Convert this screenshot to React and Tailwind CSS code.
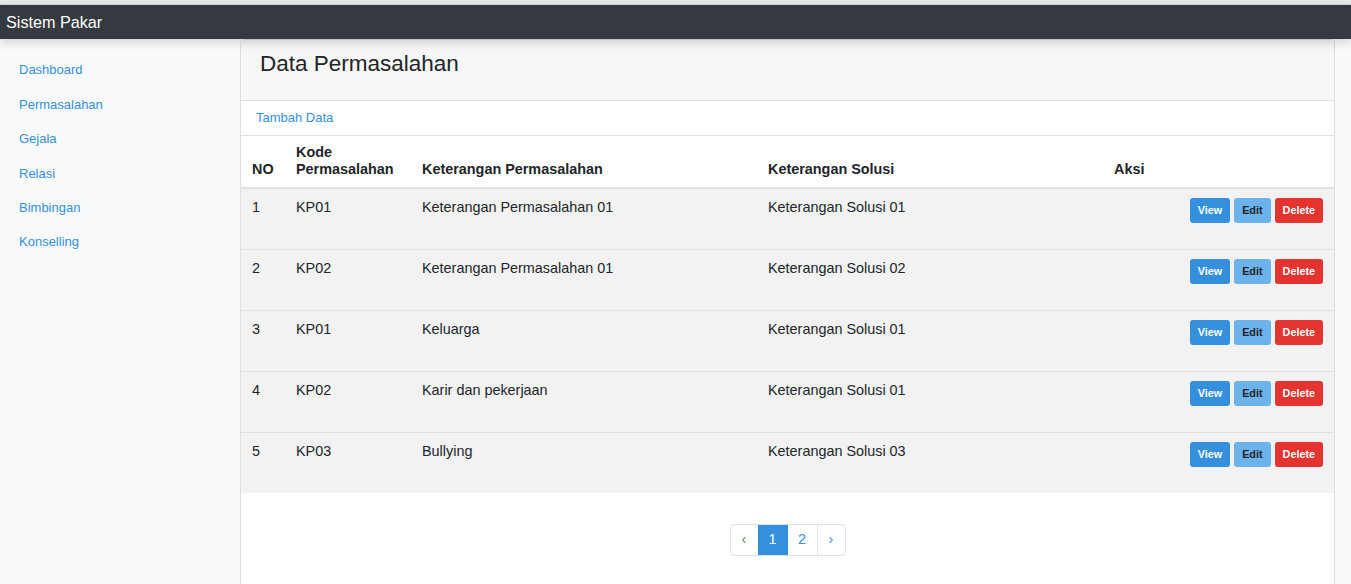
import React from 'react';

const menu = ['Dashboard', 'Permasalahan', 'Gejala', 'Relasi', 'Bimbingan', 'Konselling'];

const rows = [
  { no: 1, kode: 'KP01', ket: 'Keterangan Permasalahan 01', solusi: 'Keterangan Solusi 01' },
  { no: 2, kode: 'KP02', ket: 'Keterangan Permasalahan 01', solusi: 'Keterangan Solusi 02' },
  { no: 3, kode: 'KP01', ket: 'Keluarga', solusi: 'Keterangan Solusi 01' },
  { no: 4, kode: 'KP02', ket: 'Karir dan pekerjaan', solusi: 'Keterangan Solusi 01' },
  { no: 5, kode: 'KP03', ket: 'Bullying', solusi: 'Keterangan Solusi 03' },
];

export default function App() {
  return (
    <div className="min-h-[584px] bg-[#f8fafc] text-[#212529] font-['Liberation_Sans',Arial,sans-serif]">
      <div className="h-[5px] bg-[#ebebeb] border-b border-[#d9d9d9]" />
      <nav className="relative z-10 h-[34px] bg-[#343a40] flex items-center px-[6px] shadow-[0_3px_10px_rgba(0,0,0,0.18)]">
        <span className="text-white text-[16.2px] leading-none">Sistem Pakar</span>
      </nav>

      <div className="flex">
        <aside className="w-[240px] shrink-0 pt-[14px]">
          {menu.map((m) => (
            <a key={m} href="#" className="flex items-center h-[34.4px] px-[19px] text-[13px] text-[#3490dc]">
              {m}
            </a>
          ))}
        </aside>

        <main className="flex-1 pr-[16px]">
          <div className="bg-white border border-[#dfdfdf] rounded-t-[4px] min-h-[546px]">
            <div className="h-[61px] bg-[#f7f7f7] border-b border-[#dfdfdf] pt-[11px] pl-[19px]">
              <h4 className="text-[22.5px] leading-[26px]">Data Permasalahan</h4>
            </div>
            <div className="h-[35px] border-b border-[#dfdfdf] flex items-center pl-[15px]">
              <a href="#" className="text-[13px] text-[#3490dc]">Tambah Data</a>
            </div>

            <table className="w-full border-collapse text-[14.4px]">
              <thead>
                <tr className="border-b-2 border-[#dee2e6] align-bottom text-left">
                  <th className="w-[44px] px-[11px] pt-[8px] pb-[9px] leading-[17px] font-bold">NO</th>
                  <th className="w-[126px] px-[11px] pt-[8px] pb-[9px] leading-[17px] font-bold">Kode<br />Permasalahan</th>
                  <th className="w-[346px] px-[11px] pt-[8px] pb-[9px] leading-[17px] font-bold">Keterangan Permasalahan</th>
                  <th className="w-[346px] px-[11px] pt-[8px] pb-[9px] leading-[17px] font-bold">Keterangan Solusi</th>
                  <th className="px-[11px] pt-[8px] pb-[9px] leading-[17px] font-bold">Aksi</th>
                </tr>
              </thead>
              <tbody>
                {rows.map((r, i) => (
                  <tr key={i} className={`h-[61px] bg-[#f2f2f2] align-top ${i > 0 ? 'border-t border-[#dee2e6]' : ''}`}>
                    <td className="px-[11px] pt-[10px] leading-[17px]">{r.no}</td>
                    <td className="px-[11px] pt-[10px] leading-[17px]">{r.kode}</td>
                    <td className="px-[11px] pt-[10px] leading-[17px]">{r.ket}</td>
                    <td className="px-[11px] pt-[10px] leading-[17px]">{r.solusi}</td>
                    <td className="pl-[11px] pr-[11px] pt-[9px]">
                      <div className="flex justify-end gap-[4px]">
                        <button className="h-[25px] px-[8px] rounded-[3px] bg-[#3490dc] text-white text-[10.8px] font-bold">View</button>
                        <button className="h-[25px] px-[8px] rounded-[3px] bg-[#6cb2eb] text-[#212529] text-[10.8px] font-bold">Edit</button>
                        <button className="h-[25px] px-[8px] rounded-[3px] bg-[#e3342f] text-white text-[10.8px] font-bold">Delete</button>
                      </div>
                    </td>
                  </tr>
                ))}
              </tbody>
            </table>

            <div className="flex justify-center pt-[31px]">
              <ul className="flex text-[14.4px] rounded-[4px] border border-[#dee2e6] overflow-hidden">
                <li className="w-[27px] h-[30px] flex items-center justify-center text-[#6c757d]">‹</li>
                <li className="w-[30px] h-[30px] flex items-center justify-center bg-[#3490dc] text-white">1</li>
                <li className="w-[30px] h-[30px] flex items-center justify-center text-[#3490dc] border-r border-[#dee2e6]">2</li>
                <li className="w-[27px] h-[30px] flex items-center justify-center text-[#3490dc]">›</li>
              </ul>
            </div>
          </div>
        </main>
      </div>
    </div>
  );
}
